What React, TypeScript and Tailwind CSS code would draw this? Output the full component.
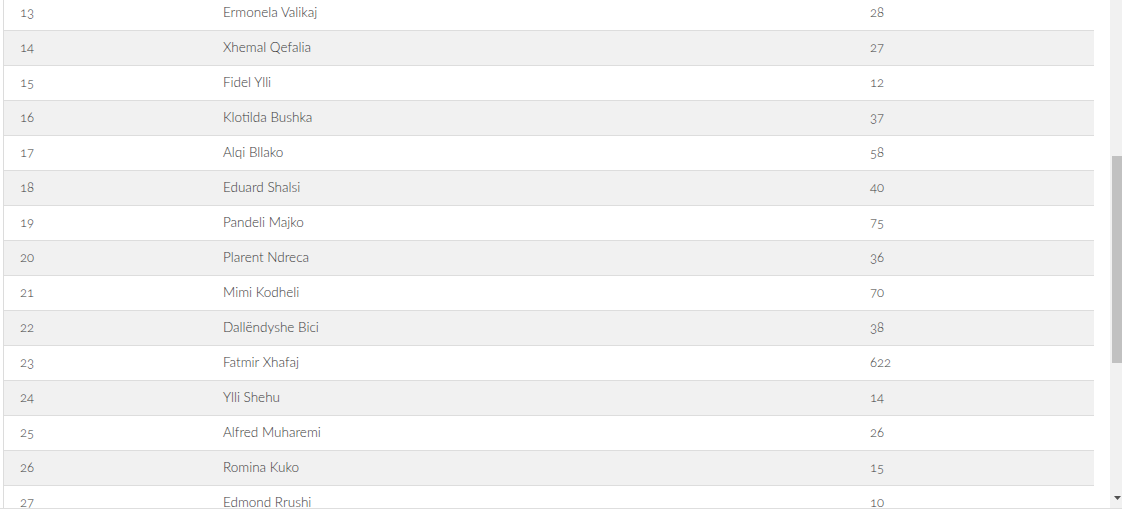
import React from "react";

const rows: [number, string, number][] = [
  [13, "Ermonela Valikaj", 28],
  [14, "Xhemal Qefalia", 27],
  [15, "Fidel Ylli", 12],
  [16, "Klotilda Bushka", 37],
  [17, "Alqi Bllako", 58],
  [18, "Eduard Shalsi", 40],
  [19, "Pandeli Majko", 75],
  [20, "Plarent Ndreca", 36],
  [21, "Mimi Kodheli", 70],
  [22, "Dallëndyshe Bici", 38],
  [23, "Fatmir Xhafaj", 622],
  [24, "Ylli Shehu", 14],
  [25, "Alfred Muharemi", 26],
  [26, "Romina Kuko", 15],
  [27, "Edmond Rrushi", 10],
];

export default function App() {
  return (
    <div className="w-[1122px] h-[517px] bg-white text-[#3a3a3a] font-['Lato','Noto_Sans',sans-serif] font-light">
      <div className="flex h-[508px] border-b border-[#dedede] box-content">
        {/* table viewport */}
        <div className="flex-1 overflow-hidden">
          <div className="ml-[3px] mr-[16px] -mt-[4px] border-l border-[#dcdcdc]">
            {rows.map(([id, name, count], i) => (
              <div
                key={id}
                className={`grid grid-cols-[203px_647px_1fr] h-[35px] pb-[1px] items-center border-b border-[#dddddd] ${
                  i % 2 === 1 ? "bg-[#f1f1f1]" : "bg-white"
                }`}
              >
                <span className="pl-4 text-[13px] oldstyle-nums">{id}</span>
                <span className="pl-4 text-[13.5px]">{name}</span>
                <span className="pl-4 text-[13px] oldstyle-nums">{count}</span>
              </div>
            ))}
          </div>
        </div>

        {/* scrollbar */}
        <div className="w-[12px] bg-[#f1f1f1] flex flex-col">
          <div className="h-[156px]" />
          <div className="h-[207px] ml-[2px] bg-[#c1c1c1]" />
          <div className="flex-1 flex items-end justify-center pb-[8px] pl-[3px]">
            <svg width="7" height="4" viewBox="0 0 7 4">
              <path d="M0 0 H7 L3.5 4 Z" fill="#505050" />
            </svg>
          </div>
        </div>
      </div>
    </div>
  );
}
